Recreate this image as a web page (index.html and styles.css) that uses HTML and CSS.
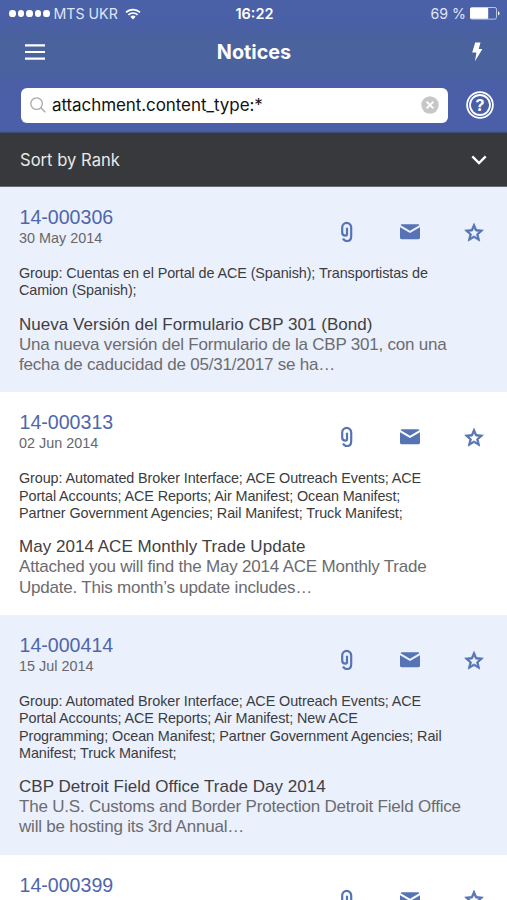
FILE: index.html
```html
<!DOCTYPE html>
<html lang="en">
<head>
    <meta charset="UTF-8">
    <meta name="viewport" content="width=device-width, initial-scale=1.0">
    <title>Notices</title>
    <link rel="stylesheet" href="styles.css">
</head>
<body>
    <!-- Shared icons -->
    <svg class="sprite" aria-hidden="true">
        <symbol id="icon-clip" viewBox="0 0 14 22">
            <path d="M7 6.8v6.4a1.3 1.3 0 0 1-1.3 1.5C3.2 14.7 2.2 13.6 2.2 11.5V6.5A4.5 4.6 0 0 1 11.2 6.500v8.400c0 3.600-1.900 5.100-4.100 5.100-2 0-3.300-.9-4.100-2.500" fill="none" stroke="currentColor" stroke-width="2.200"/>
        </symbol>
        <symbol id="icon-mail" viewBox="0 0 20 16">
            <path d="M1.3.3h17.4l.6.9L10 6.800.7 1.200z" fill="currentColor"/>
            <path d="M0 3.2l10 5.9 10-5.9v10.6a1.4 1.4 0 0 1-1.4 1.4H1.4A1.4 1.4 0 0 1 0 13.8z" fill="currentColor"/>
        </symbol>
        <symbol id="icon-star" viewBox="1.200 1.500 21.600 20.500">
            <path d="M22 9.24l-7.19-.62L12 2 9.19 8.63 2 9.24l5.46 4.73L5.82 21 12 17.27 18.18 21l-1.630-7.030L22 9.240zM12 15.400l-3.760 2.270 1-4.280-3.320-2.880 4.380-.38L12 6.100l1.710 4.040 4.380.38-3.320 2.880 1 4.280L12 15.400z" fill="currentColor" stroke="currentColor" stroke-width=".9"/>
        </symbol>
    </svg>

    <header class="header">
        <div class="status-bar">
            <div class="carrier">
                <span class="dots"><i></i><i></i><i></i><i></i><i></i></span>
                <span class="carrier-name">MTS UKR</span>
                <svg class="wifi" viewBox="0 0 16 12">
                    <path d="M1 4.4a10 10 0 0 1 14 0M3.4 6.9a6.5 6.5 0 0 1 9.2 0" fill="none" stroke="#fff" stroke-width="1.7"/>
                    <path d="M5.4 8.8a3.7 3.7 0 0 1 5.2 0L8 11.6z" fill="#fff"/>
                </svg>
            </div>
            <span class="time">16:22</span>
            <div class="power">
                <span class="percent">69 %</span>
                <svg class="battery" viewBox="0 0 30 13">
                    <rect x=".5" y=".5" width="26" height="11.6" rx="1.6" fill="none" stroke="#b9c4e4"/>
                    <rect x="0" y=".8" width="18.2" height="11" rx="1" fill="#fff"/>
                    <path d="M28 4.2a2.2 2.2 0 0 1 0 4.2z" fill="#fff"/>
                </svg>
            </div>
        </div>
        <div class="nav-bar">
            <svg class="menu-icon" viewBox="0 0 20 16">
                <path d="M0 1.3h20M0 8h20M0 14.6h20" stroke="#fff" stroke-width="2.2"/>
            </svg>
            <h1 class="nav-title">Notices</h1>
            <svg class="flash-icon" viewBox="0 0 12 20">
                <path d="M4.2.5h5.3L7.7 7H11.4L4 19.3 5.4 10.4H1.2z" fill="#fff"/>
            </svg>
        </div>
        <div class="search-bar">
            <div class="search-box">
                <svg class="search-icon" viewBox="0 0 16 16">
                    <circle cx="6.6" cy="6.6" r="5.8" fill="none" stroke="#aaa" stroke-width="1.3"/>
                    <path d="M10.8 10.8l4.5 4.5" stroke="#aaa" stroke-width="1.5"/>
                </svg>
                <span class="search-text">attachment.content_type:*</span>
                <svg class="clear-icon" viewBox="0 0 18 18">
                    <circle cx="9" cy="9" r="8.7" fill="#c7c7c7"/>
                    <path d="M5.6 5.6l6.8 6.8M12.4 5.6l-6.8 6.8" stroke="#fff" stroke-width="2"/>
                </svg>
            </div>
            <svg class="help-button" viewBox="0 0 28 28">
                <circle cx="14" cy="14" r="12.9" fill="none" stroke="#fff" stroke-width="1.8"/>
                <circle cx="14" cy="14" r="10" fill="none" stroke="#fff" stroke-width="1.8"/>
                <text x="14" y="19.7" text-anchor="middle">?</text>
            </svg>
        </div>
    </header>

    <div class="sort-bar">
        <span class="sort-label">Sort by Rank</span>
        <svg class="chevron" viewBox="0 0 16 10">
            <path d="M1.3 1.3L8 8l6.7-6.7" fill="none" stroke="#fff" stroke-width="2.4"/>
        </svg>
    </div>

    <main class="notice-list">
        <article class="notice">
            <div class="notice-head">
                <div>
                    <h2 class="notice-id">14-000306</h2>
                    <div class="notice-date">30 May 2014</div>
                </div>
                <div class="actions">
                    <svg class="clip"><use href="#icon-clip"/></svg>
                    <svg class="mail"><use href="#icon-mail"/></svg>
                    <svg class="star"><use href="#icon-star"/></svg>
                </div>
            </div>
            <p class="groups">Group: Cuentas en el Portal de ACE (Spanish); Transportistas de<br>Camion (Spanish);</p>
            <h3 class="notice-title">Nueva Versión del Formulario CBP 301 (Bond)</h3>
            <p class="summary">Una nueva versión del Formulario de la CBP 301, con una<br>fecha de caducidad de 05/31/2017 se ha…</p>
        </article>

        <article class="notice">
            <div class="notice-head">
                <div>
                    <h2 class="notice-id">14-000313</h2>
                    <div class="notice-date">02 Jun 2014</div>
                </div>
                <div class="actions">
                    <svg class="clip"><use href="#icon-clip"/></svg>
                    <svg class="mail"><use href="#icon-mail"/></svg>
                    <svg class="star"><use href="#icon-star"/></svg>
                </div>
            </div>
            <p class="groups">Group: Automated Broker Interface; ACE Outreach Events; ACE<br>Portal Accounts; ACE Reports; Air Manifest; Ocean Manifest;<br>Partner Government Agencies; Rail Manifest; Truck Manifest;</p>
            <h3 class="notice-title">May 2014 ACE Monthly Trade Update</h3>
            <p class="summary">Attached you will find the May 2014 ACE Monthly Trade<br>Update. This month’s update includes…</p>
        </article>

        <article class="notice">
            <div class="notice-head">
                <div>
                    <h2 class="notice-id">14-000414</h2>
                    <div class="notice-date">15 Jul 2014</div>
                </div>
                <div class="actions">
                    <svg class="clip"><use href="#icon-clip"/></svg>
                    <svg class="mail"><use href="#icon-mail"/></svg>
                    <svg class="star"><use href="#icon-star"/></svg>
                </div>
            </div>
            <p class="groups">Group: Automated Broker Interface; ACE Outreach Events; ACE<br>Portal Accounts; ACE Reports; Air Manifest; New ACE<br>Programming; Ocean Manifest; Partner Government Agencies; Rail<br>Manifest; Truck Manifest;</p>
            <h3 class="notice-title">CBP Detroit Field Office Trade Day 2014</h3>
            <p class="summary">The U.S. Customs and Border Protection Detroit Field Office<br>will be hosting its 3rd Annual…</p>
        </article>

        <article class="notice">
            <div class="notice-head">
                <div>
                    <h2 class="notice-id">14-000399</h2>
                    <div class="notice-date">09 Jul 2014</div>
                </div>
                <div class="actions">
                    <svg class="clip"><use href="#icon-clip"/></svg>
                    <svg class="mail"><use href="#icon-mail"/></svg>
                    <svg class="star"><use href="#icon-star"/></svg>
                </div>
            </div>
        </article>
    </main>
</body>
</html>
```

FILE: styles.css
```css
* {
    box-sizing: border-box;
}

body {
    margin: 0;
    height: 900px;
    overflow: hidden;
    font-family: "Liberation Sans", Arial, sans-serif;
    background: #fff;
}

h1, h2, h3, p {
    margin: 0;
    font-weight: normal;
}

svg {
    display: block;
    flex: none;
}

.sprite {
    display: none;
}

.header {
    height: 133px;
    color: #fff;
    font-family: Inter, sans-serif;
    background: linear-gradient(#4a60a8 0, #4a60a6 24px, #4a629e 40px, #4a629f 72px, #4a5fa8 84px, #4a5fa8 131px, #3c4763 133px);
}

.status-bar {
    display: grid;
    grid-template-columns: 1fr auto 1fr;
    align-items: center;
    height: 27px;
    padding: 0 7px 0 9px;
    font-size: 14.2px;
}

.carrier, .power {
    display: flex;
    align-items: center;
}

.power {
    justify-content: flex-end;
}

.dots {
    display: flex;
    gap: 1.9px;
    margin-right: 3.5px;
}

.dots i {
    width: 6.7px;
    height: 6.7px;
    border-radius: 50%;
    background: #fff;
}

.carrier-name, .percent {
    color: #dfe5f6;
}

.wifi {
    width: 16px;
    height: 12px;
    margin-left: 7px;
}

.time {
    font-size: 14.5px;
    font-weight: 600;
}

.battery {
    width: 30px;
    height: 13px;
    margin-left: 4px;
}

.nav-bar {
    display: grid;
    grid-template-columns: 1fr auto 1fr;
    align-items: center;
    height: 50px;
    padding: 0 24px 0 25px;
}

.menu-icon {
    width: 20px;
    height: 16px;
}

.nav-title {
    font-size: 19.8px;
    font-weight: 650;
}

.flash-icon {
    width: 12px;
    height: 20px;
    justify-self: end;
}

.search-bar {
    display: flex;
    align-items: center;
    gap: 18px;
    height: 56px;
    padding: 0 13px 0 21px;
}

.search-box {
    display: flex;
    flex: 1;
    align-items: center;
    height: 35px;
    padding: 0 9px;
    border-radius: 6px;
    background: #fff;
}

.search-icon {
    width: 16px;
    height: 16px;
}

.search-text {
    flex: 1;
    margin-left: 6px;
    font-size: 17px;
    letter-spacing: -0.08px;
    color: #111;
}

.clear-icon {
    width: 18px;
    height: 18px;
}

.help-button {
    width: 28px;
    height: 28px;
    font-size: 16px;
    font-weight: 700;
    fill: #fff;
}

.sort-bar {
    display: flex;
    align-items: center;
    justify-content: space-between;
    height: 54px;
    padding: 0 20px;
    border-bottom: 1px solid #696c73;
    font-family: Inter, sans-serif;
    background: #38393c;
}

.sort-label {
    font-size: 16.6px;
    color: #e8e8e8;
}

.chevron {
    width: 16px;
    height: 10px;
}

.notice {
    padding: 18.2px 23px 17px 19px;
    background: #fff;
}

.notice:nth-child(odd) {
    background: #ebf0fd;
}

.notice-head {
    display: flex;
    justify-content: space-between;
}

.notice-id {
    margin: 0 0 1px 0.5px;
    line-height: 24px;
    font-size: 19.6px;
    color: #4f66ac;
}

.notice-date {
    line-height: 17px;
    font-size: 14.4px;
    color: #66676b;
}

.actions {
    display: flex;
    align-items: center;
    height: 22px;
    margin-top: 16px;
    color: #5673b5;
}

.clip {
    width: 14px;
    height: 22px;
    margin-right: 46px;
}

.mail {
    width: 20px;
    height: 16px;
    margin-right: 44px;
}

.star {
    width: 20px;
    height: 19px;
}

.groups {
    margin-top: 18px;
    line-height: 17.25px;
    font-size: 14.4px;
    letter-spacing: -0.1px;
    white-space: nowrap;
    color: #3b3c40;
}

.notice-title {
    margin-top: 15px;
    line-height: 20px;
    font-size: 17px;
    letter-spacing: 0.03px;
    white-space: nowrap;
    color: #3f4044;
}

.summary {
    line-height: 20.3px;
    font-size: 17px;
    letter-spacing: -0.21px;
    white-space: nowrap;
    color: #6b6c70;
}
```
